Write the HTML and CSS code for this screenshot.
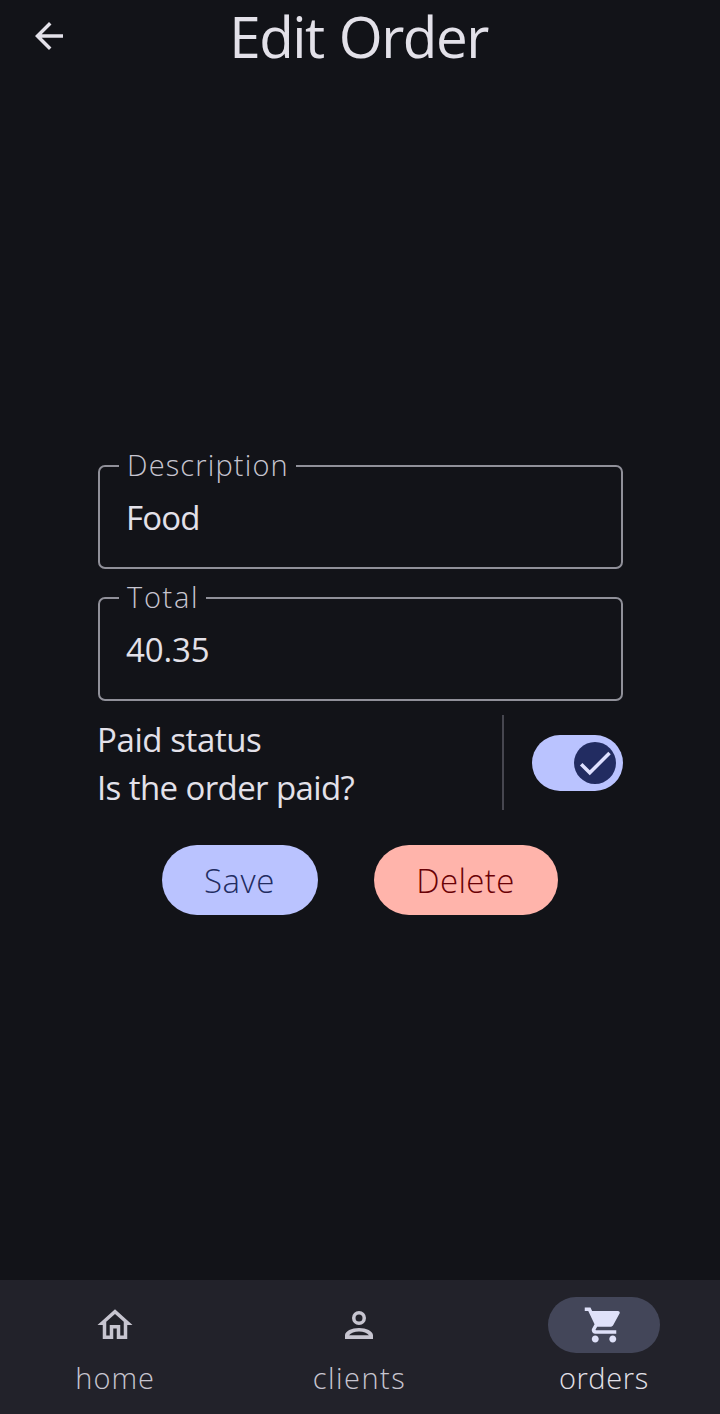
FILE: index.html
```html
<!DOCTYPE html>
<html lang="en">
<head>
<meta charset="utf-8">
<title>Edit Order</title>
<link rel="stylesheet" href="styles.css">
</head>
<body>
<div class="screen">
  <header class="topbar">
    <svg class="icon back" viewBox="0 0 24 24"><path d="M20 11H7.83l5.59-5.59L12 4l-8 8 8 8 1.41-1.41L7.83 13H20v-2z"/></svg>
    <h1 class="title">Edit Order</h1>
  </header>
  <main class="form">
    <div class="field">
      <span class="label"><span class="label-description">Description</span></span>
      <span class="value value-description">Food</span>
    </div>
    <div class="field">
      <span class="label label-short"><span class="label-total">Total</span></span>
      <span class="value value-total">40.35</span>
    </div>
    <div class="paid">
      <div class="paid-text">
        <span class="paid-title">Paid status</span>
        <span class="paid-question">Is the order paid?</span>
      </div>
      <div class="divider"></div>
      <div class="switch">
        <div class="thumb"><svg class="check" viewBox="0 0 24 24"><path d="M9 16.17L4.83 12l-1.42 1.41L9 19 21 7l-1.41-1.41z"/></svg></div>
      </div>
    </div>
    <div class="actions">
      <div class="button save"><span class="save-text">Save</span></div>
      <div class="button delete"><span class="delete-text">Delete</span></div>
    </div>
  </main>
  <nav class="navbar">
    <div class="nav-item">
      <div class="pill"><svg class="icon" viewBox="0 0 24 24"><path d="M12 5.69l5 4.5V18h-2v-6H9v6H7v-7.81l5-4.5M12 3L2 12h3v8h6v-6h2v6h6v-8h3L12 3z"/></svg></div>
      <span class="nav-label nav-home">home</span>
    </div>
    <div class="nav-item">
      <div class="pill"><svg class="icon" viewBox="0 0 24 24"><path fill-rule="evenodd" d="M12 4a4 4 0 1 0 0 8 4 4 0 0 0 0-8zm0 2a2 2 0 1 1 0 4 2 2 0 0 1 0-4zM12 13.700c-4.200 0-8 1.800-8 4.200V20h16v-2.100c0-2.400-3.800-4.200-8-4.200zm0 2c2.500 0 4.700.8 5.700 2.100H6.300c1-1.300 3.200-2.100 5.700-2.100z"/></svg></div>
      <span class="nav-label nav-clients">clients</span>
    </div>
    <div class="nav-item active">
      <div class="pill"><svg class="icon" viewBox="0 0 24 24"><path d="M7 18c-1.100 0-1.990.9-1.990 2S5.900 22 7 22s2-.9 2-2-.9-2-2-2zM1 2v2h2l3.600 7.590-1.350 2.450c-.16.28-.25.61-.25.96 0 1.100.9 2 2 2h12v-2H7.420c-.14 0-.25-.11-.25-.25l.03-.12.9-1.630h7.450c.75 0 1.410-.41 1.750-1.030l3.580-6.490c.08-.14.12-.31.12-.48 0-.55-.45-1-1-1H5.210l-.94-2H1zm16 16c-1.100 0-1.990.9-1.990 2s.89 2 1.990 2 2-.9 2-2-.9-2-2-2z"/></svg></div>
      <span class="nav-label nav-orders">orders</span>
    </div>
  </nav>
</div>
</body>
</html>
```
FILE: styles.css
```css
* { box-sizing: border-box; }
body {
  margin: 0;
  background: #121318;
  color: #e3e1e9;
  font-family: "Open Sans", "Noto Sans", sans-serif;
}
.screen {
  height: 1414px;
  display: flex;
  flex-direction: column;
}
.icon { width: 42px; height: 42px; fill: currentColor; display: block; }
.topbar {
  height: 74px;
  display: grid;
  grid-template-columns: 98px 1fr 98px;
}
.back { margin: 15px 0 0 28px; }
.title {
  margin: 0;
  padding-right: 3px;
  font-size: 56.5px;
  font-weight: 400;
  line-height: 74px;
  text-align: center;
  white-space: nowrap;
  letter-spacing: -1.5px;
  word-spacing: 2px;
}
.form {
  flex: 1;
  width: 525px;
  margin: 0 auto 0 98px;
  padding-top: 391px;
  display: flex;
  flex-direction: column;
}
.field {
  position: relative;
  height: 104px;
  margin-bottom: 28px;
  border: 2px solid #909099;
  border-radius: 7px;
  padding: 29px 26px 0;
}
.label {
  position: absolute;
  left: 19px;
  top: -21px;
  width: 177px;
  height: 38px;
  padding-left: 8px;
  line-height: 38px;
  background: #121318;
  color: #c7c5d0;
  font-size: 29px;
  font-weight: 300;
  white-space: nowrap;
}
.label-short { width: 87px; }
.label-description { letter-spacing: 1.15px; }
.label-total { letter-spacing: 1.7px; }
.value { display: block; width: max-content; font-size: 33px; line-height: 44px; white-space: nowrap; }
.value-description { letter-spacing: -0.8px; }
.value-total { letter-spacing: -0.1px; }
.paid {
  height: 95px;
  margin-top: -14px;
  display: flex;
  align-items: center;
}
.paid-text {
  width: 404px;
  padding-top: 2px;
  display: flex;
  flex-direction: column;
  align-items: flex-start;
  font-size: 33px;
  line-height: 48px;
  white-space: nowrap;
}
.paid-title { margin-left: -1px; letter-spacing: -0.4px; }
.paid-question { margin-left: -1px; letter-spacing: -0.6px; }
.divider { width: 2px; height: 95px; background: #46464f; margin-right: 28px; }
.switch {
  width: 91px;
  height: 56px;
  padding: 7px;
  border-radius: 28px;
  background: #bac3ff;
  display: flex;
  justify-content: flex-end;
}
.thumb {
  width: 42px;
  height: 42px;
  border-radius: 50%;
  background: #222c61;
}
.check { display: block; width: 42px; height: 42px; fill: #dee0ff; }
.actions { display: flex; gap: 56px; margin: 35px 0 0 64px; }
.button {
  height: 70px;
  border-radius: 35px;
  display: flex;
  align-items: center;
  justify-content: center;
  font-size: 33px;
  font-weight: 300;
  white-space: nowrap;
}
.save { width: 156px; padding-right: 1px; background: #bac3ff; color: #222c61; letter-spacing: 0.5px; }
.delete { width: 184px; padding-right: 1px; background: #ffb4ab; color: #690005; letter-spacing: 0.4px; }
.navbar {
  height: 134px;
  padding: 17px 1px 0 0;
  display: grid;
  grid-template-columns: repeat(3, 1fr);
  gap: 14px;
  background: #22222a;
  color: #c7c5d0;
}
.nav-item { display: flex; flex-direction: column; align-items: center; }
.pill {
  width: 112px;
  height: 56px;
  border-radius: 28px;
  display: flex;
  align-items: center;
  justify-content: center;
}
.active { color: #e3e1e9; }
.active .pill { background: #434659; color: #dfe1f9; }
.nav-label {
  margin-top: 5px;
  font-size: 29px;
  font-weight: 300;
  line-height: 40px;
  letter-spacing: 1px;
  white-space: nowrap;
}
.nav-clients { letter-spacing: 1.5px; }
.nav-orders { letter-spacing: 0.6px; }
```
